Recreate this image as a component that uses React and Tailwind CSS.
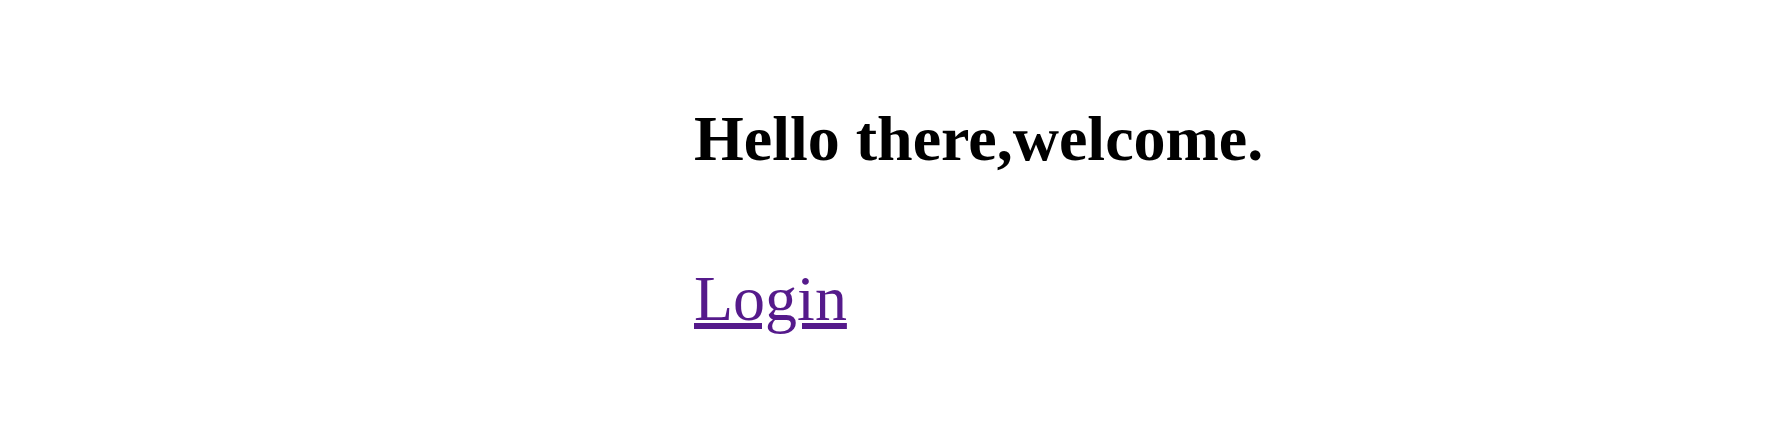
import React from 'react';

export default function App() {
  return (
    <div className="min-h-[430px] bg-white font-['Liberation_Serif',_'Times_New_Roman',_serif] text-black">
      <div className="pl-[694px] pt-[102px]">
        <h1 className="whitespace-nowrap text-[64px] font-bold leading-[74px]">Hello there,welcome.</h1>
        <a
          href="#"
          className="mt-[86px] inline-block text-[64px] leading-[74px] text-[#551a8b] underline decoration-[6px] underline-offset-[3px]"
        >
          Login
        </a>
      </div>
    </div>
  );
}
